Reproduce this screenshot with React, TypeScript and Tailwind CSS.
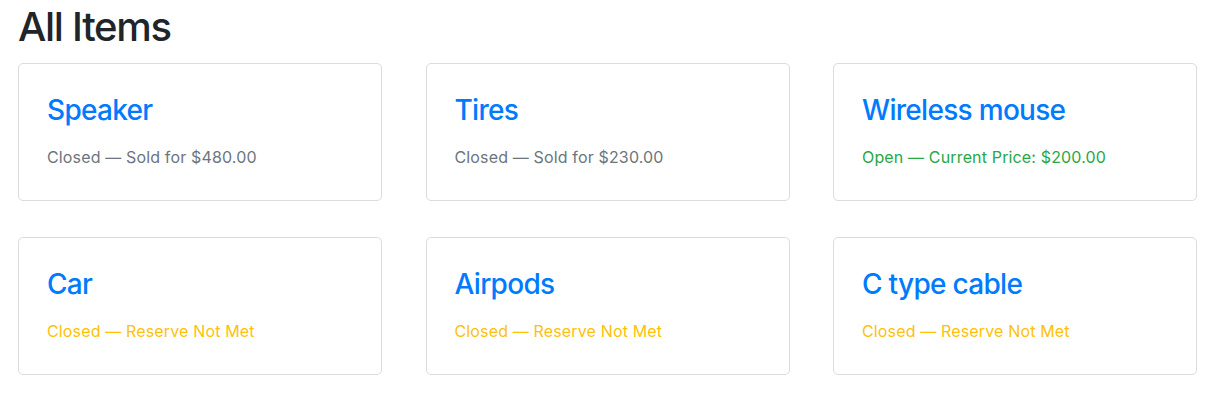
const items = [
  { name: 'Speaker', status: 'Closed — Sold for $480.00', tone: 'text-[#6c757d]' },
  { name: 'Tires', status: 'Closed — Sold for $230.00', tone: 'text-[#6c757d]' },
  { name: 'Wireless mouse', status: 'Open — Current Price: $200.00', tone: 'text-[#28a745]' },
  { name: 'Car', status: 'Closed — Reserve Not Met', tone: 'text-[#ffc107]' },
  { name: 'Airpods', status: 'Closed — Reserve Not Met', tone: 'text-[#ffc107]' },
  { name: 'C type cable', status: 'Closed — Reserve Not Met', tone: 'text-[#ffc107]' },
];

export default function App() {
  return (
    <div className="min-h-[408px] bg-white pl-[18px] pt-[3px] font-['Inter','Liberation_Sans',sans-serif] text-[#212529]">
      <h1 className="text-[40px] leading-[48px] font-medium tracking-[-1.3px]">All Items</h1>
      <div className="mt-[12px] grid w-[1179px] grid-cols-3 gap-x-[43.5px] gap-y-[36px]">
        {items.map((item) => (
          <div
            key={item.name}
            className="h-[138px] rounded-[5px] border border-[#dcdcdc] px-[28px] pt-[29px]"
          >
            <a href="#" className="block text-[28px] leading-[34px] font-medium text-[#007bff] tracking-[-0.7px]">
              {item.name}
            </a>
            <p className={`mt-[18px] text-[16px] leading-[24px] tracking-[0.15px] ${item.tone}`}>{item.status}</p>
          </div>
        ))}
      </div>
    </div>
  );
}
